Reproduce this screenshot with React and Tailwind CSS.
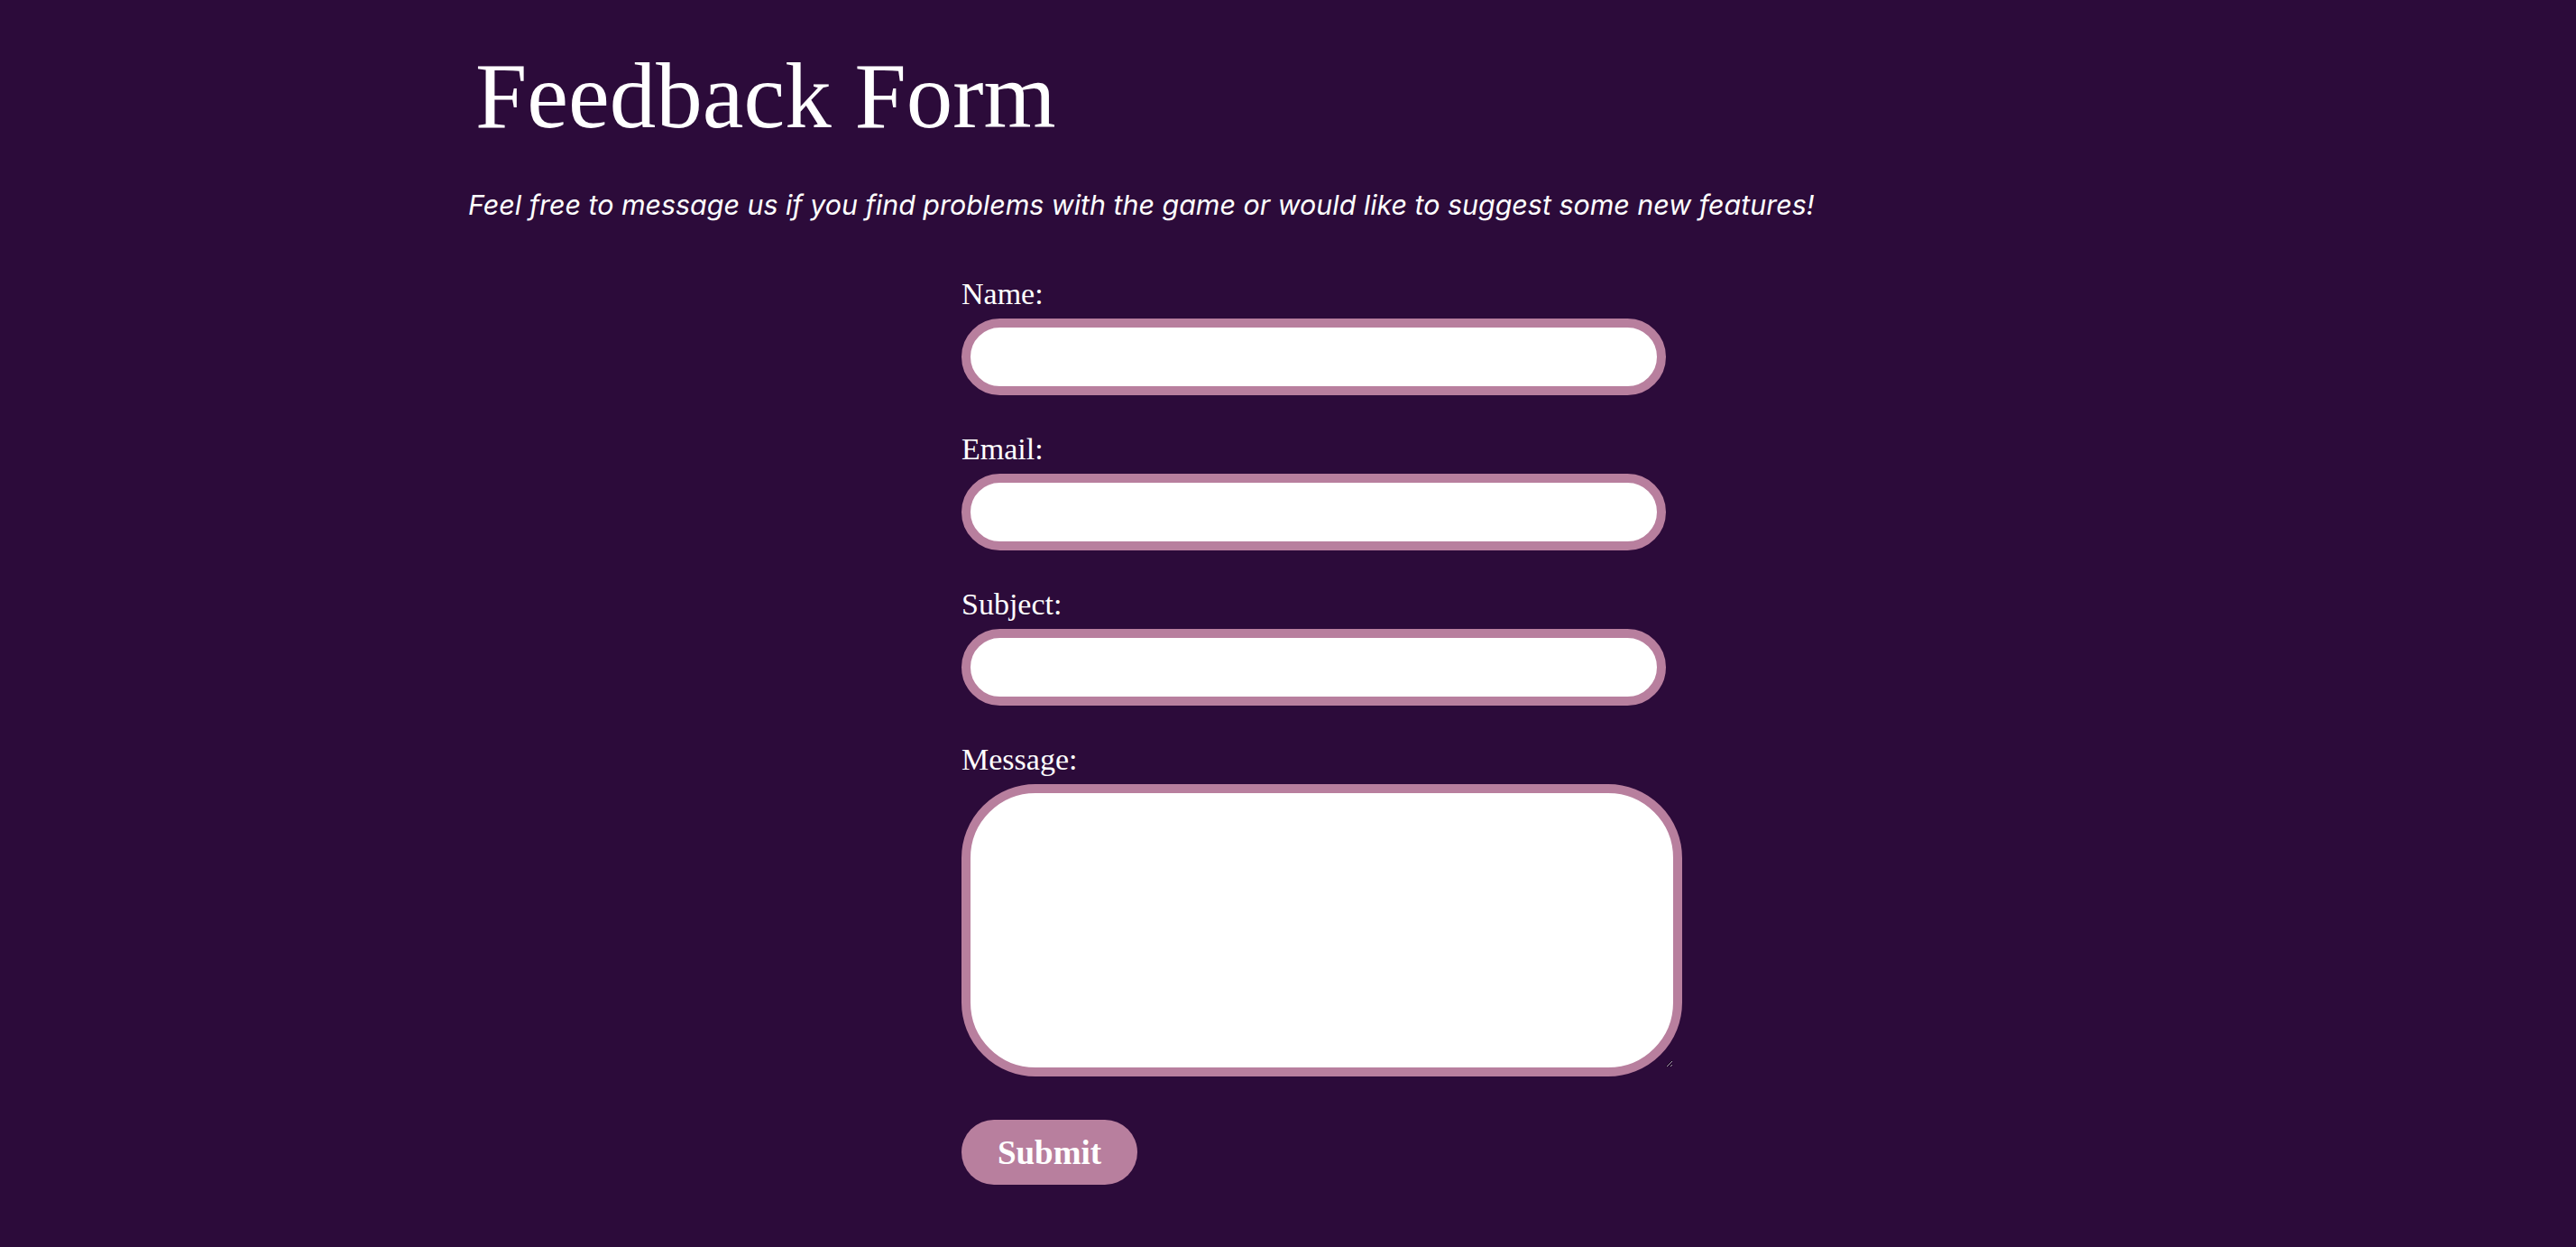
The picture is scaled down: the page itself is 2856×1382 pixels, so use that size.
import React, { useState } from 'react';

const serif = { fontFamily: '"Liberation Serif", "Times New Roman", serif' };

const fields = [
    { id: 'name', label: 'Name:', type: 'text' },
    { id: 'email', label: 'Email:', type: 'email' },
    { id: 'subject', label: 'Subject:', type: 'text' },
];

export default function App() {
    const [form, setForm] = useState({ name: '', email: '', subject: '', message: '' });

    const update = (key) => (e) => setForm({ ...form, [key]: e.target.value });

    const handleSubmit = (e) => {
        e.preventDefault();
    };

    return (
        <div className="min-h-screen w-full bg-[#2c0b3a] text-white pt-[55px] pb-[69px]">
            <h1 style={serif} className="ml-[527px] text-[103px] leading-[103px] font-normal">
                Feedback Form
            </h1>
            <p className="ml-[519px] mt-[51px] text-[30.4px] leading-[36px] italic font-['Inter',sans-serif]">
                Feel free to message us if you find problems with the game or would like to suggest some new features!
            </p>

            <form onSubmit={handleSubmit} className="ml-[1066px] mt-[64px] w-[800px]" style={serif}>
                {fields.map((f) => (
                    <div key={f.id} className="mb-[43px]">
                        <label htmlFor={f.id} className="block text-[34px] leading-[34px] mb-[10px]">
                            {f.label}
                        </label>
                        <input
                            id={f.id}
                            type={f.type}
                            value={form[f.id]}
                            onChange={update(f.id)}
                            className="block w-[781px] h-[85px] rounded-full border-[10px] border-[#b87f9e] bg-white px-6 text-[28px] text-black outline-none"
                        />
                    </div>
                ))}
                <div>
                    <label htmlFor="message" className="block text-[34px] leading-[34px] mb-[10px]">
                        Message:
                    </label>
                    <textarea
                        id="message"
                        value={form.message}
                        onChange={update('message')}
                        className="block w-[799px] h-[324px] rounded-[82px] border-[10px] border-[#b87f9e] bg-white px-8 py-6 text-[28px] text-black outline-none"
                    />
                </div>
                <button
                    type="submit"
                    className="mt-[48px] w-[195px] h-[72px] rounded-full bg-[#b87f9e] text-[37px] font-bold text-white leading-none"
                >
                    Submit
                </button>
            </form>
        </div>
    );
}
